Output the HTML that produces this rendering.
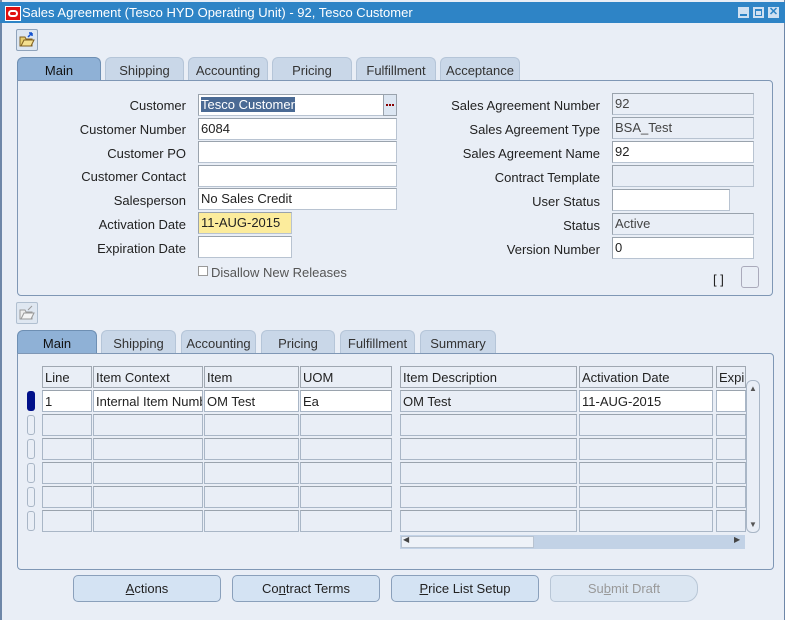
<!DOCTYPE html>
<html><head><style>
*{box-sizing:border-box}
body{margin:0;width:785px;height:620px;background:#e9eef6;font-family:"Liberation Sans",sans-serif;font-size:13px;color:#222;position:relative;overflow:hidden}
.a{position:absolute}
.win{left:0;top:0;width:785px;height:620px;border-left:2px solid #6e87a8;border-right:1px solid #6e87a8}
.title{left:0;top:2px;width:785px;height:21px;background:#2e84c6;color:#fff;font-size:13px;line-height:21px;padding-left:22px}
.lbl{text-align:right;white-space:nowrap;line-height:22px}
.f{height:22px;background:#fff;border:1px solid #b8c3d1;border-top-color:#9aa3ad;border-left-color:#9aa3ad;padding-left:2px;line-height:20px;white-space:nowrap;overflow:hidden}
.ro{background:#e9eef6;color:#444}
.tab{height:24px;background:#c9d7e8;border:1px solid #b5c5d8;border-bottom:none;border-radius:6px 6px 0 0;text-align:center;line-height:26px;color:#333}
.tab.on{background:#8fb1d6;border-color:#6e8fb3;color:#111}
.panel{border:1px solid #7f97b5;border-radius:0 4px 4px 4px}
.hd{height:22px;border:1px solid #a0a8b2;background:#e9eef6;padding-left:2px;line-height:21px;white-space:nowrap;overflow:hidden}
.c{height:22px;border:1px solid #a9b6c6;border-top-color:#9aa3ad;background:#e9eef6;padding-left:2px;line-height:21px;white-space:nowrap;overflow:hidden}
.w{background:#fff}
.btn{height:27px;top:575px;width:148px;background:#d4e3f3;border:1px solid #8aa0bb;border-radius:5px;text-align:center;line-height:25px}
</style></head><body>
<div class="a win"></div>
<div class="a title">Sales Agreement (Tesco HYD Operating Unit) - 92, Tesco Customer</div>
<div class="a" style="left:5px;top:6px;width:16px;height:15px;background:#e01010;border:1px solid #fff"><div class="a" style="left:2px;top:3px;width:10px;height:7px;border:2px solid #fff;border-radius:4px"></div></div>
<div class="a" style="left:738px;top:7px;width:11px;height:11px;background:#cfe0f1"><div class="a" style="left:2px;top:7px;width:7px;height:2px;background:#2e84c6"></div></div>
<div class="a" style="left:753px;top:7px;width:11px;height:11px;background:#cfe0f1"><div class="a" style="left:2px;top:2px;width:7px;height:7px;border:1px solid #2e84c6;border-top-width:2px"></div></div>
<div class="a" style="left:768px;top:7px;width:11px;height:11px;background:#cfe0f1;color:#2e84c6;font-size:11px;line-height:11px;text-align:center;font-weight:bold">✕</div>

<div class="a" style="left:16px;top:29px;width:22px;height:22px;border:1px solid #8fa3bb;border-radius:2px;background:#dce6f2"><svg width="20" height="20"><path d="M3 7h5l1 2h6v7H3z" fill="#e8d070" stroke="#806020"/><path d="M4 16l3-6h10l-3 6z" fill="#f4e090" stroke="#806020"/><path d="M11 7l4-4m0 0h-3m3 0v3" stroke="#1050d0" stroke-width="1.5" fill="none"/></svg></div>

<div class="a tab on" style="left:17px;top:57px;width:84px">Main</div>
<div class="a tab" style="left:105px;top:57px;width:79px">Shipping</div>
<div class="a tab" style="left:188px;top:57px;width:80px">Accounting</div>
<div class="a tab" style="left:272px;top:57px;width:80px">Pricing</div>
<div class="a tab" style="left:356px;top:57px;width:80px">Fulfillment</div>
<div class="a tab" style="left:440px;top:57px;width:80px">Acceptance</div>
<div class="a panel" style="left:17px;top:80px;width:756px;height:216px"></div>

<div class="a lbl" style="left:0;width:186px;top:95px">Customer</div>
<div class="a lbl" style="left:0;width:186px;top:119px">Customer Number</div>
<div class="a lbl" style="left:0;width:186px;top:143px">Customer PO</div>
<div class="a lbl" style="left:0;width:186px;top:166px">Customer Contact</div>
<div class="a lbl" style="left:0;width:186px;top:190px">Salesperson</div>
<div class="a lbl" style="left:0;width:186px;top:214px">Activation Date</div>
<div class="a lbl" style="left:0;width:186px;top:238px">Expiration Date</div>
<div class="a f" style="left:198px;top:94px;width:186px"><span style="background:#4a6a94;color:#fff">Tesco Customer</span></div>
<div class="a" style="left:383px;top:94px;width:14px;height:22px;background:#dce6f2;border:1px solid #9aa3ad"><div class="a" style="left:2px;top:9px;width:8px;height:2px;border-left:2px solid #800;border-right:2px solid #800"><div class="a" style="left:1px;top:0;width:2px;height:2px;background:#800"></div></div></div>
<div class="a f" style="left:198px;top:118px;width:199px">6084</div>
<div class="a f" style="left:198px;top:141px;width:199px"></div>
<div class="a f" style="left:198px;top:165px;width:199px"></div>
<div class="a f" style="left:198px;top:188px;width:199px">No Sales Credit</div>
<div class="a f" style="left:198px;top:212px;width:94px;background:#fcec9c">11-AUG-2015</div>
<div class="a f" style="left:198px;top:236px;width:94px"></div>
<div class="a" style="left:198px;top:266px;width:10px;height:10px;border:1px solid #999;background:#fff"></div>
<div class="a" style="left:211px;top:265px;color:#555;line-height:16px">Disallow New Releases</div>

<div class="a lbl" style="left:400px;width:200px;top:95px">Sales Agreement Number</div>
<div class="a lbl" style="left:400px;width:200px;top:119px">Sales Agreement Type</div>
<div class="a lbl" style="left:400px;width:200px;top:143px">Sales Agreement Name</div>
<div class="a lbl" style="left:400px;width:200px;top:167px">Contract Template</div>
<div class="a lbl" style="left:400px;width:200px;top:191px">User Status</div>
<div class="a lbl" style="left:400px;width:200px;top:215px">Status</div>
<div class="a lbl" style="left:400px;width:200px;top:239px">Version Number</div>
<div class="a f ro" style="left:612px;top:93px;width:142px">92</div>
<div class="a f ro" style="left:612px;top:117px;width:142px">BSA_Test</div>
<div class="a f" style="left:612px;top:141px;width:142px">92</div>
<div class="a f ro" style="left:612px;top:165px;width:142px"></div>
<div class="a f" style="left:612px;top:189px;width:118px"></div>
<div class="a f ro" style="left:612px;top:213px;width:142px">Active</div>
<div class="a f" style="left:612px;top:237px;width:142px">0</div>
<div class="a" style="left:713px;top:272px">[ ]</div>
<div class="a" style="left:741px;top:266px;width:18px;height:22px;border:1px solid #aab;border-radius:3px"></div>

<div class="a" style="left:16px;top:302px;width:22px;height:22px;border:1px solid #b0bfd0;border-radius:2px;background:#dfe7f1"><svg width="20" height="20"><path d="M3 7h5l1 2h6v7H3z" fill="#eee" stroke="#999"/><path d="M4 16l3-6h10l-3 6z" fill="#f4f4f4" stroke="#999"/><path d="M11 7l4-4" stroke="#999" fill="none"/></svg></div>

<div class="a tab on" style="left:17px;top:330px;width:80px">Main</div>
<div class="a tab" style="left:101px;top:330px;width:75px">Shipping</div>
<div class="a tab" style="left:181px;top:330px;width:75px">Accounting</div>
<div class="a tab" style="left:261px;top:330px;width:74px">Pricing</div>
<div class="a tab" style="left:340px;top:330px;width:75px">Fulfillment</div>
<div class="a tab" style="left:420px;top:330px;width:76px">Summary</div>
<div class="a panel" style="left:17px;top:353px;width:757px;height:217px"></div>

<div class="a hd" style="left:42px;top:366px;width:50px">Line</div>
<div class="a hd" style="left:93px;top:366px;width:110px">Item Context</div>
<div class="a hd" style="left:204px;top:366px;width:95px">Item</div>
<div class="a hd" style="left:300px;top:366px;width:92px">UOM</div>
<div class="a hd" style="left:400px;top:366px;width:177px">Item Description</div>
<div class="a hd" style="left:579px;top:366px;width:134px">Activation Date</div>
<div class="a hd" style="left:716px;top:366px;width:30px">Expi</div>

<div class="a" style="left:27px;top:391px;width:8px;height:20px;background:#00108a;border-radius:3px"></div>
<div class="a c w" style="left:42px;top:390px;width:50px">1</div>
<div class="a c w" style="left:93px;top:390px;width:110px">Internal Item Number</div>
<div class="a c w" style="left:204px;top:390px;width:95px">OM Test</div>
<div class="a c w" style="left:300px;top:390px;width:92px">Ea</div>
<div class="a c" style="left:400px;top:390px;width:177px">OM Test</div>
<div class="a c w" style="left:579px;top:390px;width:134px">11-AUG-2015</div>
<div class="a c w" style="left:716px;top:390px;width:30px"></div>

<div id="rows"></div>
<script>
var h='';[414,438,462,486,510].forEach(function(y){
h+='<div class="a" style="left:27px;top:'+(y+1)+'px;width:8px;height:20px;border:1px solid #a9b6c6;border-radius:3px"></div>';
[[42,50],[93,110],[204,95],[300,92],[400,177],[579,134],[716,30]].forEach(function(c){h+='<div class="a c" style="left:'+c[0]+'px;top:'+y+'px;width:'+c[1]+'px"></div>';});
});document.getElementById('rows').innerHTML=h;
</script>

<div class="a" style="left:746px;top:380px;width:14px;height:153px;border:1px solid #a9b6c6;border-radius:6px;background:#e9eef6"></div>
<div class="a" style="left:749px;top:384px;font-size:8px;color:#555">▲</div>
<div class="a" style="left:749px;top:520px;font-size:8px;color:#555">▼</div>
<div class="a" style="left:400px;top:535px;width:345px;height:14px;background:#c2d2e6"></div>
<div class="a" style="left:401px;top:536px;width:133px;height:12px;background:#eef2f8;border:1px solid #b8c3d1"></div>
<div class="a" style="left:403px;top:535px;font-size:8px;color:#444">◀</div>
<div class="a" style="left:734px;top:535px;font-size:8px;color:#444">▶</div>

<div class="a btn" style="left:73px"><u>A</u>ctions</div>
<div class="a btn" style="left:232px">Co<u>n</u>tract Terms</div>
<div class="a btn" style="left:391px"><u>P</u>rice List Setup</div>
<div class="a btn" style="left:550px;color:#999;border-color:#b8c6d6;background:#dbe6f2;border-radius:5px 12px 12px 5px">Su<u>b</u>mit Draft</div>
</body></html>
